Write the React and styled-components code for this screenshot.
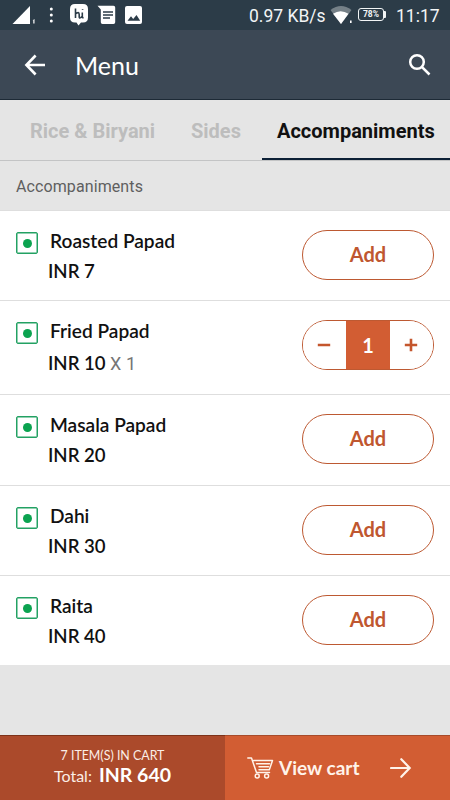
import React, { useState } from "react";
import styled, { createGlobalStyle } from "styled-components";

const GlobalStyle = createGlobalStyle`
  * {
    box-sizing: border-box;
  }
  body {
    margin: 0;
    background: #e5e5e5;
    font-family: Lato, sans-serif;
  }
  button {
    font-family: inherit;
    cursor: pointer;
  }
  svg {
    display: block;
    flex: none;
  }
`;

const Screen = styled.div`
  display: flex;
  flex-direction: column;
  width: 450px;
  height: 800px;
  overflow: hidden;
  background: #e5e5e5;
`;

const StatusBar = styled.div`
  display: flex;
  justify-content: space-between;
  flex: none;
  height: 30px;
  padding-left: 12px;
  padding-right: 10px;
  background: #2c3c48;
  color: #f2f5f6;
  font-family: Roboto, sans-serif;
  font-size: 18px;
  line-height: 32px;
`;

const StatusGroup = styled.div`
  display: flex;
  align-items: flex-start;
`;

const NetSpeed = styled.span`
  width: 81px;
  font-size: 17.5px;
  white-space: nowrap;
`;

const Battery = styled.span`
  display: flex;
  align-items: center;
  justify-content: center;
  width: 26px;
  height: 13px;
  margin-top: 8px;
  border: 1px solid #f2f5f6;
  border-radius: 3px;
  font-size: 8.5px;
  font-weight: 700;
  line-height: 1;
`;

const BatteryTip = styled.span`
  width: 2px;
  height: 7px;
  margin-top: 11px;
  border-radius: 0 1px 1px 0;
  background: #f2f5f6;
`;

const Clock = styled.span`
  width: 44px;
  margin-left: 10px;
  font-size: 17.5px;
  white-space: nowrap;
`;

const AppBar = styled.header`
  display: flex;
  align-items: center;
  flex: none;
  height: 70px;
  padding: 0 18px 0 24px;
  border-bottom: 1px solid #1d2a36;
  background: #3c4855;
  color: #fff;
`;

const Title = styled.h1`
  flex: 1;
  margin: 0 0 0 29px;
  font-size: 25px;
  font-weight: 400;
`;

const Tabs = styled.nav`
  display: flex;
  flex: none;
  height: 61px;
  border-bottom: 1px solid #c3c4c5;
`;

const Tab = styled.a`
  flex: none;
  height: 60px;
  padding-left: ${props => props.$inset}px;
  width: ${props => props.$width}px;
  border-bottom: ${props => (props.$active ? "2px solid #0c2036" : "none")};
  color: ${props => (props.$active ? "#111" : "#bdbdbd")};
  font-family: Roboto, sans-serif;
  font-size: 20px;
  font-weight: 700;
  line-height: 62px;
  white-space: nowrap;
`;

const SectionTitle = styled.h2`
  flex: none;
  height: 49px;
  margin: 0;
  padding-left: 16px;
  color: #5f5f5f;
  font-family: Roboto, sans-serif;
  font-size: 16px;
  font-weight: 400;
  line-height: 52px;
  letter-spacing: 0.1px;
`;

const List = styled.ul`
  flex: 1;
  margin: 0;
  padding: 0;
  list-style: none;
`;

const Item = styled.li`
  display: flex;
  height: ${props => props.$height}px;
  padding: 20px 16px 0;
  border-top: 1px solid #dedede;
  background: #fff;
`;

const VegMark = styled.span`
  display: flex;
  align-items: center;
  justify-content: center;
  flex: none;
  width: 22px;
  height: 22px;
  margin-top: 1px;
  border: 1px solid #23a163;
  border-radius: 2px;
  box-shadow: inset 0 0 0 0.5px #23a163;

  &::after {
    content: "";
    width: 9px;
    height: 9px;
    border-radius: 50%;
    background: #0ba350;
  }
`;

const Details = styled.div`
  flex: 1;
  padding-left: 10px;
  color: #111;
`;

const Name = styled.div`
  padding-left: 2px;
  font-size: 19.1px;
  font-weight: 600;
  line-height: 20px;
`;

const Price = styled.div`
  margin-top: ${props => (props.$counted ? 12 : 10)}px;
  font-size: 18.6px;
  font-weight: 600;
  line-height: 20px;
`;

const Quantity = styled.span`
  color: #757575;
  font-family: Roboto, sans-serif;
  font-size: 18px;
  font-weight: 400;
`;

const AddButton = styled.button`
  width: 132px;
  height: 50px;
  margin-top: -1px;
  padding: 0 0 2px;
  border: 1px solid #bd5932;
  border-radius: 25px;
  background: #fff;
  color: #bf5730;
  font-size: 20px;
  font-weight: 700;
`;

const Stepper = styled.div`
  display: flex;
  width: 132px;
  height: 50px;
  margin-top: -1px;
  border: 1px solid #bd5932;
  border-radius: 25px;
  overflow: hidden;
`;

const StepButton = styled.button`
  display: flex;
  align-items: center;
  justify-content: center;
  flex: 1;
  padding: 0 1px 0 0;
  border: 0;
  background: #fff;
  color: #c4562d;
`;

const StepCount = styled.span`
  width: 44px;
  background: #d25d33;
  color: #fff;
  font-size: 20px;
  font-weight: 700;
  line-height: 48px;
  text-align: center;
`;

const CartBar = styled.footer`
  display: flex;
  flex: none;
  height: 65px;
  color: #fbeee6;
`;

const Summary = styled.div`
  width: 225px;
  padding-top: 12px;
  border-top: 1px solid #7c3219;
  background: #ab4a2b;
  text-align: center;
`;

const CartCount = styled.div`
  font-size: 12.4px;
  line-height: 16px;
`;

const Total = styled.div`
  font-size: 16px;
  line-height: 22px;
`;

const Amount = styled.strong`
  margin-left: 3px;
  color: #fff;
  font-size: 19.5px;
  font-weight: 700;
`;

const ViewCart = styled.button`
  display: flex;
  align-items: center;
  flex: 1;
  padding: 0 0 0 22px;
  border: 0;
  border-top: 1px solid #a74b2a;
  background: #d25d33;
  color: #fff3ea;
  font-size: 19px;
  font-weight: 700;
`;

const ViewCartLabel = styled.span`
  width: 110px;
  margin-left: 5px;
  margin-right: 1px;
  padding-bottom: 1px;
  text-align: left;
`;

const NotificationIcons = () => (
  <svg width="136" height="30" viewBox="12 0 136 30" fill="#fff">
    <path d="M12.5 24 30 6v18z" />
    <path d="M32.500 20.500l2-1.500v4.500h-1.200v-3.200z" />
    <circle cx="51.300" cy="9" r="1.500" />
    <circle cx="51.300" cy="15" r="1.500" />
    <circle cx="51.300" cy="21" r="1.500" />
    <path d="M75 4h8q5 0 5 5v8.500q0 5-5 5h-2l-2.500 3-2-3H75q-5 0-5-5V9q0-5 5-5z" />
    <path
      d="M75.500 8.500v9.500M75.500 14q3.500-3 3.700.5V17q0 1.500 1.500.6l1.600-1.300V12.500v4.500q.2 1 1.300.6M82.600 9.200v.9"
      fill="none"
      stroke="#2c3c48"
      strokeWidth="1.600"
    />
    <path d="M97.500 5.800H113.500q1.700 0 1.700 1.700V22.300q0 1.700-1.700 1.700H102.500q-1.700 0-1.700-1.700V9.500z" />
    <path
      d="M103 12h10M103 15h10M103 18h7"
      stroke="#2c3c48"
      strokeWidth="1.300"
    />
    <rect x="125" y="6" width="17" height="18" rx="2" />
    <path d="M127.500 20.800l3.500-4.600 2.200 2.700 3.300-4 3.700 5.900z" fill="#2c3c48" />
  </svg>
);

const WifiIcon = () => (
  <svg width="28" height="30" viewBox="330 0 28 30" fill="#fff">
    <path d="M330.500 10q10.500-8 21 0L341 24z" opacity="0.35" />
    <path d="M333 13.700q7.500-5 15.500 0L341 24z" />
    <rect x="350" y="20.500" width="1.600" height="2.500" />
  </svg>
);

const BackIcon = () => (
  <svg width="22" height="22" viewBox="0 0 22 22">
    <path
      d="M21 11H2.800M11.600 1.500 2.400 11l9.200 9.500"
      fill="none"
      stroke="#fff"
      strokeWidth="2.600"
    />
  </svg>
);

const SearchIcon = () => (
  <svg width="24" height="24" viewBox="0 0 24 24">
    <g fill="none" stroke="#fff" strokeWidth="2.500">
      <circle cx="9" cy="9" r="6.800" />
      <path d="M13.800 13.800l7.700 7.700" />
    </g>
  </svg>
);

const CartIcon = () => (
  <svg width="27" height="22" viewBox="0 0 27 22">
    <g
      fill="none"
      stroke="#fff3ea"
      strokeWidth="1.500"
      strokeLinecap="round"
      strokeLinejoin="round"
    >
      <path d="M.8 1H4.500L9.500 15.600H22.500M6.500 3.600H25.500L22.300 12.700H12M9.500 6.700H22.500M12 9.700H21.500" />
      <circle cx="10.200" cy="19" r="2" />
      <circle cx="19.600" cy="19" r="2" />
    </g>
  </svg>
);

const ForwardIcon = () => (
  <svg width="22" height="20" viewBox="0 0 22 20">
    <path
      d="M1 10h18.300M11.300 1.200l8.400 8.800-8.400 8.800"
      fill="none"
      stroke="#fff3ea"
      strokeWidth="2.200"
      strokeLinecap="round"
    />
  </svg>
);

const items = [
  { name: "Roasted Papad", price: 7, height: 90 },
  { name: "Fried Papad", price: 10, height: 94 },
  { name: "Masala Papad", price: 20, height: 91 },
  { name: "Dahi", price: 30, height: 90 },
  { name: "Raita", price: 40, height: 90 }
];

const MenuItem = ({ item, count, onChange }) => (
  <Item $height={item.height}>
    <VegMark />
    <Details>
      <Name>{item.name}</Name>
      <Price $counted={count > 0}>
        INR {item.price}
        {count > 0 && <Quantity> X {count}</Quantity>}
      </Price>
    </Details>
    {count > 0 ? (
      <Stepper>
        <StepButton aria-label="Remove one" onClick={() => onChange(count - 1)}>
          <svg width="14" height="14" viewBox="0 0 14 14">
            <path d="M.8 7h12.400" stroke="currentColor" strokeWidth="2.600" />
          </svg>
        </StepButton>
        <StepCount>{count}</StepCount>
        <StepButton aria-label="Add one" onClick={() => onChange(count + 1)}>
          <svg width="14" height="14" viewBox="0 0 14 14">
            <path
              d="M.8 7h12.400M7 .8v12.400"
              stroke="currentColor"
              strokeWidth="2.600"
            />
          </svg>
        </StepButton>
      </Stepper>
    ) : (
      <AddButton onClick={() => onChange(1)}>Add</AddButton>
    )}
  </Item>
);

const App = () => {
  const [counts, setCounts] = useState({ "Fried Papad": 1 });

  return (
    <Screen>
      <GlobalStyle />
      <StatusBar>
        <NotificationIcons />
        <StatusGroup>
          <NetSpeed>0.97 KB/s</NetSpeed>
          <WifiIcon />
          <Battery>78%</Battery>
          <BatteryTip />
          <Clock>11:17</Clock>
        </StatusGroup>
      </StatusBar>
      <AppBar>
        <BackIcon />
        <Title>Menu</Title>
        <SearchIcon />
      </AppBar>
      <Tabs>
        <Tab $inset={30} $width={176}>
          Rice &amp; Biryani
        </Tab>
        <Tab $inset={15} $width={86}>
          Sides
        </Tab>
        <Tab $inset={15} $width={188} $active>
          Accompaniments
        </Tab>
      </Tabs>
      <SectionTitle>Accompaniments</SectionTitle>
      <List>
        {items.map(item => (
          <MenuItem
            key={item.name}
            item={item}
            count={counts[item.name] || 0}
            onChange={count => setCounts({ ...counts, [item.name]: count })}
          />
        ))}
      </List>
      <CartBar>
        <Summary>
          <CartCount>7 ITEM(S) IN CART</CartCount>
          <Total>
            Total: <Amount>INR 640</Amount>
          </Total>
        </Summary>
        <ViewCart>
          <CartIcon />
          <ViewCartLabel>View cart</ViewCartLabel>
          <ForwardIcon />
        </ViewCart>
      </CartBar>
    </Screen>
  );
};

export default App;
